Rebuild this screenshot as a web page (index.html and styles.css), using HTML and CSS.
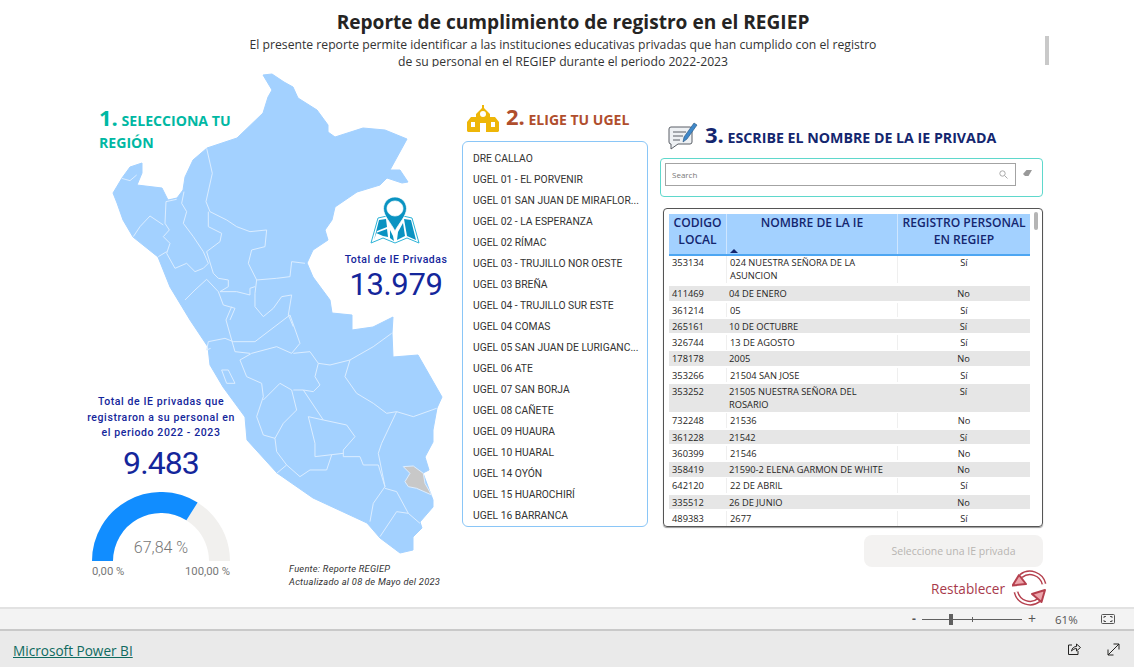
FILE: index.html
```html
<!DOCTYPE html>
<html lang="es">
<head>
<meta charset="utf-8">
<title>Reporte de cumplimiento de registro en el REGIEP</title>
<link rel="stylesheet" href="styles.css">
</head>
<body>
<div class="report">
  <svg class="map" width="1134" height="607" viewBox="0 0 1134 607" aria-hidden="true">
    <path class="land" d="M263 75 L272 74 L284 82 L293 87 L298 98 L317 110 L328 125 L328 132 L335 137 L363 128 L385 130 L407 139 L390 170 L400 170 L408 182 L402 183 L387 178 L380 185 L357 192 L335 207 L332 220 L325 230 L328 240 L313 250 L307 263 L313 277 L330 300 L332 313 L352 315 L352 330 L373 327 L393 317 L392 333 L393 357 L418 355 L442 397 L437 408 L433 430 L433 442 L425 457 L429 470 L423 473 L433 500 L433 507 L420 522 L422 528 L413 537 L413 550 L400 553 L380 538 L367 523 L313 498 L277 473 L247 440 L245 417 L223 387 L210 365 L208 347 L190 320 L170 287 L158 257 L133 237 L123 220 L117 203 L113 193 L122 178 L130 167 L142 163 L142 173 L137 185 L162 188 L168 200 L177 198 L183 190 L185 177 L193 160 L207 148 L237 138 L263 113 L268 97 L272 90 Z"/>
    <g class="borders" transform="translate(80 60) scale(.3333)">
      <path d="M380 265 L397 340 L378 425 L390 455 L440 480 L470 500 L510 515 L560 510 L555 560 L515 570 L505 610 L530 660 L590 655 L630 650 L635 605 L675 610"/>
      <path d="M385 455 L385 500 L425 520 L420 545 L380 575 L400 640 L415 655 L445 660 L445 680 L420 695"/>
      <path d="M312 395 L305 430 L320 455 L310 490 L340 530 L370 575 L385 610 L370 625 L345 635 L320 610 L285 625 L260 580 L270 550 L250 530 L268 510 L255 490 L258 425 L290 418"/>
      <path d="M160 530 L180 500 L210 468 L250 495"/>
      <path d="M235 590 L260 575"/>
      <path d="M125 355 L150 362 L170 345"/>
      <path d="M315 720 L345 690 L380 658 L415 695 L430 735 L465 745 L450 780"/>
      <path d="M420 695 L470 695 L510 705 L510 685 L525 680"/>
      <path d="M530 660 L525 700 L525 740 L550 770 L580 745 L605 710 L635 705 L625 765 L640 800"/>
    </g>
    <g class="borders" transform="translate(80 310) scale(.3333)">
      <path d="M455 -10 L438 30 L455 90 L465 125 L510 130"/>
      <path d="M630 15 L525 95 L460 95 L435 85 L385 95 L380 120 L392 115"/>
      <path d="M630 15 L660 100 L635 130 L590 110 L515 130 L480 150 L500 200 L545 220 L550 260 L530 320 L550 375 L585 385 L610 340 L650 300 L635 240 L600 220 L550 270"/>
      <path d="M640 130 L690 125 L715 160 L705 200 L720 225 L700 245 L670 240 L640 240"/>
      <path d="M715 160 L750 165 L810 150 L880 110 L935 70"/>
      <path d="M810 150 L795 200 L830 250 L880 280 L920 310 L950 305 L1000 320 L1070 295"/>
      <path d="M670 240 L730 330 L800 345 L825 380 L790 420 L790 440 L840 440 L850 465 L895 465 L915 530 L880 580 L870 635"/>
      <path d="M950 305 L905 400 L895 430 L915 530"/>
      <path d="M730 330 L685 320 L705 400 L705 440 L790 430"/>
      <path d="M585 385 L590 425 L620 465 L590 490"/>
      <path d="M620 465 L660 500 L690 480 L740 480 L755 435"/>
      <path d="M915 535 L950 545 L985 610 L1020 640"/>
      <path d="M985 610 L950 605 L900 680"/>
      <path d="M425 180 L445 180 L465 220 L440 220 Z"/>
      <path class="selected" d="M970 470 L1000 468 L1030 490 L1035 520 L1055 555 L1010 535 L985 530 L975 515 L990 490 Z"/>
    </g>
  </svg>

  <header class="header">
    <h1 class="title">Reporte de cumplimiento de registro en el REGIEP</h1>
    <p class="subtitle">El presente reporte permite identificar a las instituciones educativas privadas que han cumplido con el registro<br>de su personal en el REGIEP durante el periodo 2022-2023</p>
  </header>
  <div class="page-thumb"></div>

  <main class="main">
    <section class="col-left">
      <h2 class="step step-teal"><span class="num">1.</span> SELECCIONA TU<br>REGIÓN</h2>

      <div class="total-kpi">
        <svg class="pin-icon" width="50" height="48" viewBox="0 0 50 48" aria-hidden="true">
          <path class="map-outline" d="M1 47 L8 22 L17 20 L25 25 L33 20 L42 22 L49 47 L37 42 L25 47 L13 42 Z"/>
          <path class="map-fill" d="M4 44 L9 24 L16 23 L17 31 L7 35 Z M6 37 L17 33 L18 41 L13 40 Z M20 34 L23 40 L24 45 L20 42 Z M34 23 L41 24 L46 44 L37 40 Z M28 36 L33 27 L35 40 L27 44 Z"/>
          <path class="pin" fill-rule="evenodd" d="M25 1 C18.5 1 13.5 6 13.5 12.5 C13.5 20 21 27 25 35 C29 27 36.500 20 36.500 12.5 C36.500 6 31.500 1 25 1 Z M25 5 C29.500 5 33 8.300 33 12.500 C33 16.500 29.500 20 25 20 C20.500 20 17 16.500 17 12.500 C17 8.300 20.500 5 25 5 Z"/>
        </svg>
        <div class="kpi-label">Total de IE Privadas</div>
        <div class="kpi-value">13.979</div>
      </div>

      <div class="registered">
        <p class="reg-label">Total de IE privadas que registraron a su personal en el periodo 2022 - 2023</p>
        <div class="reg-value">9.483</div>
        <div class="gauge">
          <svg width="138" height="70" viewBox="0 0 138 70" aria-hidden="true">
            <path class="gauge-bg" d="M0 69 A69 69 0 0 1 138 69 L117 69 A48 48 0 0 0 21 69 Z"/>
            <path class="gauge-fg" d="M0 69 A69 69 0 0 1 105.600 10.500 L94.400 28.300 A48 48 0 0 0 21 69 Z"/>
          </svg>
          <span class="gauge-value">67,84 %</span>
        </div>
        <div class="gauge-scale"><span>0,00 %</span><span>100,00 %</span></div>
      </div>

      <p class="source">Fuente: Reporte REGIEP<br>Actualizado al 08 de Mayo del 2023</p>
    </section>

    <section class="col-mid">
      <h2 class="step step-rust">
        <svg class="school-icon" width="32" height="27" viewBox="0 0 32 27" aria-hidden="true">
          <path fill-rule="evenodd" d="M15 0 H17 V3 L23 9 V12 H28 L32 17 V26 L31 27 H1 L0 26 V17 L4 12 H9 V9 L15 3 Z M16 6 A3 3 0 1 0 16.010 12 A3 3 0 1 0 16 6 Z M4 17 V22 H8 V17 Z M24 17 V22 H28 V17 Z M13 18 V27 H19 V18 Z"/>
        </svg>
        <span class="step-text"><span class="num">2.</span> ELIGE TU UGEL</span>
      </h2>
      <ul class="ugel-list">
        <li>DRE CALLAO</li>
        <li>UGEL 01 - EL PORVENIR</li>
        <li>UGEL 01 SAN JUAN DE MIRAFLOR...</li>
        <li>UGEL 02 - LA ESPERANZA</li>
        <li>UGEL 02 RÍMAC</li>
        <li>UGEL 03 - TRUJILLO NOR OESTE</li>
        <li>UGEL 03 BREÑA</li>
        <li>UGEL 04 - TRUJILLO SUR ESTE</li>
        <li>UGEL 04 COMAS</li>
        <li>UGEL 05 SAN JUAN DE LURIGANC...</li>
        <li>UGEL 06 ATE</li>
        <li>UGEL 07 SAN BORJA</li>
        <li>UGEL 08 CAÑETE</li>
        <li>UGEL 09 HUAURA</li>
        <li>UGEL 10 HUARAL</li>
        <li>UGEL 14 OYÓN</li>
        <li>UGEL 15 HUAROCHIRÍ</li>
        <li>UGEL 16 BARRANCA</li>
      </ul>
    </section>

    <section class="col-right">
      <h2 class="step step-navy">
        <svg class="note-icon" width="30" height="28" viewBox="0 0 30 28" aria-hidden="true">
          <path class="note-bubble" d="M3 5 H22 Q24 5 24 7 V20 Q24 22 22 22 H10 L3 27 V22 H3 Q1 22 1 20 V7 Q1 5 3 5 Z"/>
          <path class="note-lines" d="M5 10 H18 M5 14 H15 M5 18 H12"/>
          <path class="note-pencil" d="M15 20 L16 15 L26 1 L29 3 L19 17 Z"/>
        </svg>
        <span class="step-text"><span class="num">3.</span> ESCRIBE EL NOMBRE DE LA IE PRIVADA</span>
      </h2>

      <div class="search-card">
        <div class="search-box">
          <span>Search</span>
          <svg width="9" height="9" viewBox="0 0 9 9" aria-hidden="true"><circle class="stroke-grey" cx="3.500" cy="3.500" r="2.700"/><path class="stroke-grey" d="M5.500 5.500 L8.500 8.500"/></svg>
        </div>
        <svg class="eraser" width="9" height="7" viewBox="0 0 9 7" aria-hidden="true"><path d="M3.500 0 H9 L5.500 6 H2 L0 4 Z"/></svg>
      </div>

      <div class="table-card">
        <div class="table-thumb"></div>
        <div class="thead">
          <div>CODIGO<br>LOCAL</div>
          <div class="th-name">NOMBRE DE LA IE<i class="sort"></i></div>
          <div>REGISTRO PERSONAL<br>EN REGIEP</div>
        </div>
        <div class="tbody">
          <div class="row"><div>353134</div><div>024 NUESTRA SEÑORA DE LA<br>ASUNCION</div><div>Sí</div></div>
          <div class="row"><div>411469</div><div>04 DE ENERO</div><div>No</div></div>
          <div class="row"><div>361214</div><div>05</div><div>Sí</div></div>
          <div class="row"><div>265161</div><div>10 DE OCTUBRE</div><div>Sí</div></div>
          <div class="row"><div>326744</div><div>13 DE AGOSTO</div><div>Sí</div></div>
          <div class="row"><div>178178</div><div>2005</div><div>No</div></div>
          <div class="row"><div>353266</div><div>21504 SAN JOSE</div><div>Sí</div></div>
          <div class="row"><div>353252</div><div>21505 NUESTRA SEÑORA DEL<br>ROSARIO</div><div>Sí</div></div>
          <div class="row"><div>732248</div><div>21536</div><div>No</div></div>
          <div class="row"><div>361228</div><div>21542</div><div>Sí</div></div>
          <div class="row"><div>360399</div><div>21546</div><div>No</div></div>
          <div class="row"><div>358419</div><div>21590-2 ELENA GARMON DE WHITE</div><div>No</div></div>
          <div class="row"><div>642120</div><div>22 DE ABRIL</div><div>Sí</div></div>
          <div class="row"><div>335512</div><div>26 DE JUNIO</div><div>No</div></div>
          <div class="row"><div>489383</div><div>2677</div><div>Sí</div></div>
        </div>
      </div>

      <button class="select-btn" type="button">Seleccione una IE privada</button>

      <div class="reset">
        <span>Restablecer</span>
        <svg width="36" height="36" viewBox="0 0 36 36" aria-hidden="true">
          <path class="arc-out" d="M9 6 A14.500 14.500 0 0 1 32 14"/>
          <path class="arc-in" d="M9 6 A14.500 14.500 0 0 1 32 14"/>
          <path class="arc-out" d="M27 30 A14.500 14.500 0 0 1 4 22"/>
          <path class="arc-in" d="M27 30 A14.500 14.500 0 0 1 4 22"/>
          <path class="arrow" d="M.5 15.500 L7 5 L14 14 Z"/>
          <path class="arrow" d="M33 20 L29.500 32 L20 24 Z"/>
        </svg>
      </div>
    </section>
  </main>
</div>

<div class="zoombar">
  <span class="zoom-minus">-</span>
  <div class="slider"><i class="slider-tick"></i><i class="slider-thumb"></i></div>
  <span class="zoom-plus">+</span>
  <span class="zoom-pct">61%</span>
  <svg class="fit" width="14" height="10" viewBox="0 0 14 10" aria-hidden="true">
    <rect x=".5" y=".5" width="13" height="9" rx="1" class="stroke-dark"/>
    <path class="stroke-dark" d="M3 4 V2.500 H5 M9 2.500 H11 V4 M11 6 V7.500 H9 M5 7.500 H3 V6"/>
  </svg>
</div>

<footer class="footer">
  <a class="brand" href="#">Microsoft Power BI</a>
  <div class="footer-icons">
    <svg width="14" height="14" viewBox="0 0 14 14" aria-hidden="true">
      <path class="stroke-ink" d="M5 3 H1.500 V12.500 H11 V9"/>
      <path class="stroke-ink" d="M4.500 9 C5 6 7 4.500 9.500 4.500 V2 L13.500 5.500 L9.500 9 V6.500 C7.500 6.500 6 7.500 4.500 9 Z"/>
    </svg>
    <svg width="13" height="13" viewBox="0 0 13 13" aria-hidden="true">
      <path class="stroke-ink" d="M1 12 L12 1 M6.500 1 H12 V6.500 M1 6.500 V12 H6.500"/>
    </svg>
  </div>
</footer>
</body>
</html>
```
FILE: styles.css
```css
* { box-sizing: border-box; }
html, body { margin: 0; padding: 0; height: 100%; overflow: hidden; background: #fff; }
body { font-family: "Open Sans", "Liberation Sans", sans-serif; color: #252423; display: flex; flex-direction: column; }

.report { position: relative; height: 607px; flex: none; overflow: hidden; }
.map { position: absolute; left: 0; top: 0; }
.land { fill: #a3d1ff; stroke: #a3d1ff; stroke-width: 1; stroke-linejoin: round; }
.borders path { fill: none; stroke: #dcedff; stroke-width: 3; stroke-linejoin: round; }
.borders path.selected { fill: #c8c8c8; stroke: #dcedff; }

.header { position: relative; height: 67px; overflow: hidden; text-align: center; padding: 10px 0 0 0; width: 1126px; }
.title { margin: 0; padding-left: 20px; font-size: 19.100px; line-height: 25px; font-weight: 700; color: #252423; }
.subtitle { margin: 1px 0 0; font-size: 12.200px; line-height: 17px; color: #333; }
.page-thumb { position: absolute; left: 1045px; top: 36px; width: 4px; height: 29px; background: #c9c9c9; }

.main { position: relative; display: flex; padding-left: 92px; margin-top: 1px; }
.step { margin: 0; font-weight: 700; font-size: 14px; line-height: 22px; }
.num { font-size: 22px; font-weight: 700; }
.step-text { white-space: pre; }
.step-teal { color: #00b8a3; font-size: 14.100px; }
.step-rust { color: #b04e2d; display: flex; align-items: center; height: 30px; }
.step-navy { color: #14266f; display: flex; align-items: center; height: 30px; padding-left: 8px; font-size: 14.200px; position: relative; top: -1px; }

.col-left { position: relative; width: 370px; height: 539px; padding-top: 38px; }
.col-left .step { padding-left: 7px; }
.total-kpi { position: absolute; left: 240px; top: 128px; width: 128px; text-align: center; }
.pin-icon { display: block; margin: 0 auto 0; position: relative; left: -1px; }
.map-outline { fill: #fff; stroke: #2db4d8; stroke-width: 1; stroke-linejoin: round; }
.map-fill { fill: #0a93c2; }
.pin { fill: #0a93c2; stroke: #fff; stroke-width: .7; }
.kpi-label { font-family: Roboto, sans-serif; font-weight: 500; font-size: 10.500px; line-height: 14px; margin-top: 9px; color: #14269b; letter-spacing: .5px; }
.kpi-value { font-family: Roboto, sans-serif; font-size: 31px; line-height: 36px; color: #14269b; letter-spacing: -.4px; }

.registered { width: 138px; margin-top: 240px; text-align: center; }
.reg-label { margin: 0 -8px; font-family: Roboto, sans-serif; font-weight: 500; font-size: 10.500px; line-height: 15.500px; color: #14269b; letter-spacing: .6px; }
.reg-value { font-family: Roboto, sans-serif; font-size: 32px; line-height: 38px; margin-top: 3px; color: #14269b; letter-spacing: -.9px; }
.gauge { position: relative; height: 70px; margin-top: 10px; }
.gauge svg { display: block; }
.gauge-bg { fill: #f1f0ee; }
.gauge-fg { fill: #118dff; }
.gauge-value { position: absolute; left: 0; right: 0; bottom: 4px; font-family: Roboto, sans-serif; font-weight: 300; font-size: 16px; line-height: 20px; color: #777; }
.gauge-scale { display: flex; justify-content: space-between; font-family: Roboto, sans-serif; font-size: 11.300px; line-height: 14px; color: #777; margin-top: 3px; }
.source { position: absolute; left: 197px; top: 494px; margin: 0; font-family: Roboto, sans-serif; font-style: italic; font-size: 9.300px; line-height: 13px; color: #333; white-space: nowrap; letter-spacing: .25px; }

.col-mid { width: 186px; margin-right: 12px; padding-top: 35px; }
.school-icon { fill: #eeb608; margin: 0 7px 0 5px; flex: none; }
.ugel-list { list-style: none; margin: 8px 0 0; padding: 6px 8px 0 10px; height: 386px; border: 1px solid #8ac6f7; border-radius: 6px; overflow: hidden; background: #fff; }
.ugel-list li { font-family: Roboto, sans-serif; font-size: 10.300px; line-height: 21px; color: #333; white-space: nowrap; }

.col-right { width: 383px; padding-top: 54px; }
.note-icon { margin-right: 7px; flex: none; }
.note-bubble { fill: #eef1f4; stroke: #5a5f66; stroke-width: 1; }
.note-lines { fill: none; stroke: #5a5f66; stroke-width: 1; }
.note-pencil { fill: #3f88c9; stroke: #26527c; stroke-width: .6; }
.search-card { height: 39px; margin-top: 6px; border: 1px solid #5fd8cc; border-radius: 4px; padding: 4px 10px 0 4px; display: flex; align-items: flex-start; gap: 7px; }
.search-box { width: 352px; height: 23px; border: 1px solid #a3a3a3; display: flex; align-items: center; justify-content: space-between; padding: 0 7px 0 6px; font-size: 8px; color: #777; }
.stroke-grey { fill: none; stroke: #aaa; stroke-width: 1; }
.eraser { fill: #999; margin-top: 7px; }

.table-card { position: relative; margin: 11px 0 0 3px; width: 380px; height: 319px; border: 1px solid #555; border-radius: 4px; box-shadow: 0 1px 1px #999; padding: 5px 0 0 5px; overflow: hidden; }
.table-thumb { position: absolute; left: 370px; top: 3px; width: 4px; height: 18px; background: #b5b5b5; border-radius: 2px; }
.thead { display: grid; grid-template-columns: 57px 171px 133px; width: 361px; height: 42px; background: #a3d1ff; border-bottom: 2px solid #4da6f2; color: #14266f; font-size: 12.100px; font-weight: 600; line-height: 17px; text-align: center; }
.thead > div { border-left: 1px solid #cfe6ff; }
.thead > div:first-child { border-left: none; }
.th-name { position: relative; }
.sort { position: absolute; left: 3px; bottom: 1px; width: 0; height: 0; border: 4px solid transparent; border-top: none; border-bottom: 4px solid #14266f; }
.tbody { width: 361px; }
.row { display: grid; grid-template-columns: 57px 171px 133px; margin-bottom: 1.700px; font-size: 9.300px; line-height: 13.300px; color: #1f1e1d; min-height: 14.600px; }
.row > div { padding: 1px 0 0 3px; }
.row:first-child { margin-bottom: 3.700px; }
.row:first-child > div { padding-top: 0; }
.row > div:last-child { text-align: center; padding-left: 0; }
.row > div + div { border-left: 1px solid #efefef; }
.row:nth-child(even) { background: #e6e6e6; }
.row:nth-child(even) > div { border-left: none; }

.select-btn { display: block; margin: 8px 0 0 204px; width: 179px; height: 32px; border: none; border-radius: 8px; background: #f3f2f1; font-family: inherit; font-size: 10.500px; color: #b8b5b2; }
.reset { display: flex; align-items: center; justify-content: flex-end; margin: 3px -5px 0 0; gap: 7px; color: #a83a4b; font-size: 13.600px; }
.arc-out, .arc-in { fill: none; }
.arc-out { stroke: #b5404e; stroke-width: 5; }
.arc-in { stroke: #fff; stroke-width: 2; }
.arrow { fill: #eca5ab; stroke: #b5404e; stroke-width: 2; stroke-linejoin: round; }

.zoombar { height: 24px; flex: none; background: #f3f3f3; border-top: 2px solid #e2e2e2; border-bottom: 2px solid #c9c9c9; display: flex; align-items: center; padding-left: 912px; font-size: 12px; color: #555; }
.zoom-minus { width: 10px; font-weight: 700; line-height: 16px; }
.slider { position: relative; width: 100px; height: 1px; background: #606060; }
.slider-thumb { position: absolute; left: 27px; top: -5px; width: 4px; height: 11px; background: #606060; }
.slider-tick { position: absolute; left: 50px; top: -2px; width: 1px; height: 5px; background: #606060; }
.zoom-plus { margin-left: 6px; width: 12px; font-size: 14px; line-height: 16px; }
.zoom-pct { margin-left: 15px; width: 46px; font-size: 11.500px; }
.stroke-dark { fill: none; stroke: #555; stroke-width: 1; }

.footer { flex: 1; background: #eaeaea; display: flex; align-items: center; justify-content: space-between; padding: 0 14px 0 13px; }
.brand { font-size: 13.600px; line-height: 18px; color: #0f6a60; text-decoration: underline; position: relative; top: 2px; }
.footer-icons { display: flex; gap: 26px; align-items: center; }
.stroke-ink { fill: none; stroke: #252423; stroke-width: 1; }
```
